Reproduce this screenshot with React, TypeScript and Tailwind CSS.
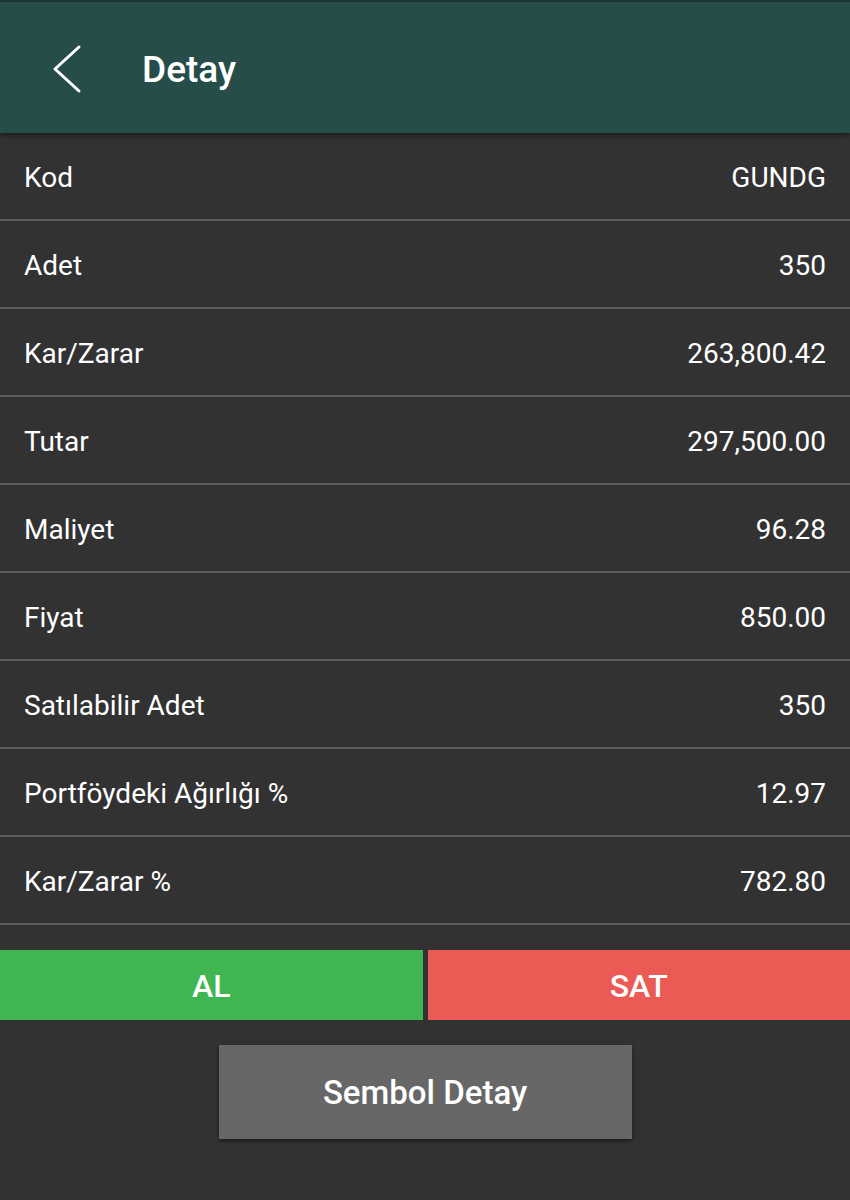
const rows: [string, string][] = [
  ['Kod', 'GUNDG'],
  ['Adet', '350'],
  ['Kar/Zarar', '263,800.42'],
  ['Tutar', '297,500.00'],
  ['Maliyet', '96.28'],
  ['Fiyat', '850.00'],
  ['Satılabilir Adet', '350'],
  ['Portföydeki Ağırlığı %', '12.97'],
  ['Kar/Zarar %', '782.80'],
]

export default function App() {
  return (
    <div className="w-[850px] h-[1200px] bg-[#323232] text-white font-['Roboto',sans-serif] overflow-hidden">
      {/* Header */}
      <div className="h-[133px] bg-[#264d49] border-t-2 border-[#1a3633] flex items-center shadow-[0_2px_6px_rgba(0,0,0,0.5)] relative z-10">
        <svg className="ml-[50px] mt-[2px] w-[34px] h-[50px]" viewBox="0 0 34 50" fill="none">
          <path d="M29 3 L5 25 L29 47" stroke="white" strokeWidth="3" strokeLinecap="round" strokeLinejoin="round" />
        </svg>
        <h1 className="ml-[58px] mt-[4px] text-[37px] font-medium">Detay</h1>
      </div>

      {/* Rows */}
      <div>
        {rows.map(([label, value]) => (
          <div key={label} className="h-[88px] pt-[4px] border-b-2 border-[#5c5c5c] flex items-center justify-between px-[24px] text-[28px]">
            <span>{label}</span>
            <span>{value}</span>
          </div>
        ))}
      </div>

      {/* AL / SAT */}
      <div className="mt-[25px] flex gap-[5px] h-[70px]">
        <button className="flex-1 bg-[#40b652] text-[32px] font-medium pt-[2px]">AL</button>
        <button className="flex-1 bg-[#eb5a55] text-[32px] font-medium pt-[2px]">SAT</button>
      </div>

      <div className="flex justify-center mt-[25px]">
        <button className="w-[413px] h-[94px] bg-[#676767] text-[33px] font-medium pt-[2px] shadow-[0_2px_4px_rgba(0,0,0,0.5)]">
          Sembol Detay
        </button>
      </div>
    </div>
  )
}
